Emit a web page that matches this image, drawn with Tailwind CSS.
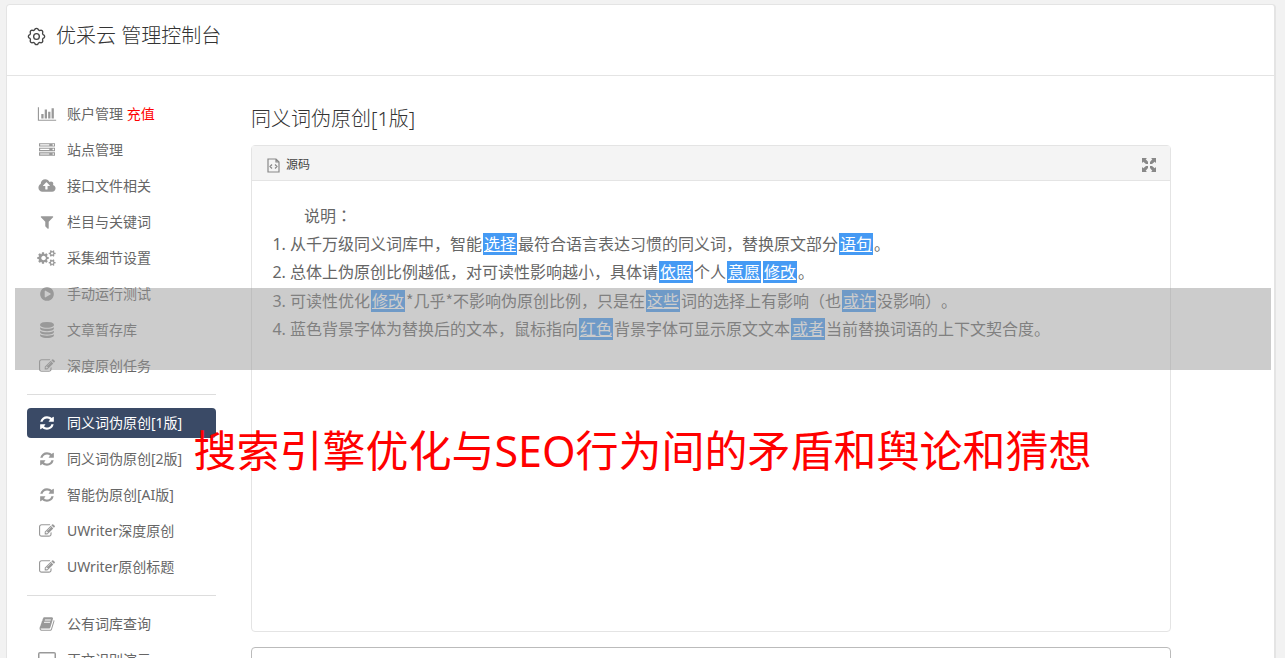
<!DOCTYPE html>
<html lang="zh-CN">
<head>
  <meta charset="UTF-8" />
  <meta name="viewport" content="width=device-width, initial-scale=1" />
  <title>优采云 管理控制台</title>
  <script src="https://cdn.jsdelivr.net/npm/@tailwindcss/browser@4"></script>
</head>
<body class="bg-[#f2f2f2] text-[#666] text-sm font-['Noto_Sans','Noto_Sans_CJK_SC',sans-serif]">

  <!-- Icons -->
  <svg class="hidden" aria-hidden="true">
    <symbol id="i-chart" viewBox="0 0 2048 1792"><path d="M640 896v512h-256v-512h256zm384-512v1024h-256v-1024h256zm1024 1152v128h-2048v-1536h128v1408h1920zm-640-896v768h-256v-768h256zm384-384v1152h-256v-1152h256z"/></symbol>
    <symbol id="i-server" viewBox="0 0 1792 1792"><path d="M128 1408h1024v-128h-1024v128zm0-512h1024v-128h-1024v128zm1568 448q0-40-28-68t-68-28-68 28-28 68 28 68 68 28 68-28 28-68zm-1568-960h1024v-128h-1024v128zm1568 448q0-40-28-68t-68-28-68 28-28 68 28 68 68 28 68-28 28-68zm0-512q0-40-28-68t-68-28-68 28-28 68 28 68 68 28 68-28 28-68zm96 832v384h-1792v-384h1792zm0-512v384h-1792v-384h1792zm0-512v384h-1792v-384h1792z"/></symbol>
    <symbol id="i-cloud" viewBox="0 0 1920 1792"><path d="M1280 864q0-14-9-23l-352-352q-9-9-23-9t-23 9l-351 351q-10 12-10 24 0 14 9 23t23 9h224v352q0 13 9.500 22.500t22.500 9.500h192q13 0 22.500-9.500t9.500-22.500v-352h224q13 0 22.500-9.500t9.500-22.500zm640 288q0 159-112.500 271.500t-271.500 112.500h-1088q-185 0-316.500-131.500t-131.500-316.500q0-130 70-240t188-165q-2-30-2-43 0-212 150-362t362-150q156 0 285.500 87t188.500 231q71-62 166-62 106 0 181 75t75 181q0 76-41 138 130 31 213.500 135.500t83.500 238.500z"/></symbol>
    <symbol id="i-filter" viewBox="0 0 1792 1792"><path d="M1595 295q17 41-14 70l-493 493v742q0 42-39 59-13 5-25 5-27 0-45-19l-256-256q-19-19-19-45v-486l-493-493q-31-29-14-70 17-39 59-39h1280q42 0 59 39z"/></symbol>
    <symbol id="i-cogs" viewBox="0 0 1920 1792">
      <path d="M832 896q0-106-75-181t-181-75-181 75-75 181 75 181 181 75 181-75 75-181zm320-91v185q0 10-7 19.500t-16 10.500l-155 24q-11 35-32 76 34 48 90 115 7 11 7 20 0 12-7 19-23 30-82.500 89.500t-78.500 59.500q-11 0-21-7l-115-90q-37 19-77 31-11 108-23 155-7 24-30 24h-186q-11 0-20-7.500t-10-17.500l-23-153q-34-10-75-31l-118 89q-7 7-20 7-11 0-21-8-144-133-144-160 0-9 7-19 10-14 41-53t47-61q-23-44-35-82l-152-24q-10-1-17-9.500t-7-19.500v-185q0-10 7-19.500t16-10.500l155-24q11-35 32-76-34-48-90-115-7-11-7-20 0-12 7-20 22-30 82-89t79-59q11 0 21 7l115 90q34-18 77-32 11-108 23-154 7-24 30-24h186q11 0 20 7.500t10 17.500l23 153q34 10 75 31l118-89q8-7 20-7 11 0 21 8 144 133 144 160 0 8-7 19-12 16-42 54t-45 60q23 48 34 82l152 23q10 2 17 10.500t7 19.500z"/>
      <path id="small-cog" d="M1664 1408q0-52-38-90t-90-38-90 38-38 90q0 53 37.500 90.500t90.500 37.500 90.500-37.500 37.500-90.500zm256-70v140q0 16-149 31-12 27-30 52 51 113 51 138 0 4-4 7-122 71-124 71-8 0-46-47t-52-68q-20 2-30 2t-30-2q-14 21-52 68t-46 47q-2 0-124-71-4-3-4-7 0-25 51-138-18-25-30-52-149-15-149-31v-140q0-16 149-31 13-29 30-52-51-113-51-138 0-4 4-7 4-2 35-20t59-34 30-16q8 0 46 46.500t52 67.500q20-2 30-2t30 2q51-71 92-112l6-2q4 0 124 70 4 3 4 7 0 25-51 138 17 23 30 52 149 15 149 31z"/>
      <use href="#small-cog" y="-1024"/>
    </symbol>
    <symbol id="i-play" viewBox="0 0 1792 1792"><path d="M896 128q209 0 385.500 103t279.500 279.500 103 385.500-103 385.500-279.500 279.500-385.500 103-385.500-103-279.500-279.500-103-385.500 103-385.500 279.500-279.500 385.500-103zm384 823q32-18 32-55t-32-55l-544-320q-31-19-64-1-32 19-32 56v640q0 37 32 56 16 8 32 8 17 0 32-9z"/></symbol>
    <symbol id="i-db" viewBox="0 0 1792 1792"><path d="M896 768q237 0 443-43t325-127v170q0 69-103 128t-280 93.500-385 34.500-385-34.500-280-93.500-103-128v-170q119 84 325 127t443 43zm0 768q237 0 443-43t325-127v170q0 69-103 128t-280 93.500-385 34.500-385-34.500-280-93.500-103-128v-170q119 84 325 127t443 43zm0-384q237 0 443-43t325-127v170q0 69-103 128t-280 93.500-385 34.500-385-34.500-280-93.500-103-128v-170q119 84 325 127t443 43zm0-1152q208 0 385 34.500t280 93.500 103 128v128q0 69-103 128t-280 93.500-385 34.500-385-34.500-280-93.500-103-128v-128q0-69 103-128t280-93.500 385-34.500z"/></symbol>
    <symbol id="i-edit" viewBox="0 0 1792 1792"><path d="M888 1184l116-116-152-152-116 116v56h96v96h56zm440-720q-16-16-33 1l-350 350q-17 17-1 33t33-1l350-350q17-17 1-33zm80 594v190q0 119-84.500 203.500t-203.500 84.500h-832q-119 0-203.500-84.500t-84.500-203.500v-832q0-119 84.500-203.500t203.500-84.500h832q63 0 117 25 15 7 18 23 3 17-9 29l-49 49q-14 14-32 8-23-6-45-6h-832q-66 0-113 47t-47 113v832q0 66 47 113t113 47h832q66 0 113-47t47-113v-126q0-13 9-22l64-64q15-15 35-7t20 29zm-96-738l288 288-672 672h-288v-288zm444 132l-92 92-288-288 92-92q28-28 68-28t68 28l152 152q28 28 28 68t-28 68z"/></symbol>
    <symbol id="i-refresh" viewBox="0 0 1792 1792"><path d="M1639 1056q0 5-1 7-64 268-268 434.500t-478 166.500q-146 0-282.500-55t-243.500-157l-129 129q-19 19-45 19t-45-19-19-45v-448q0-26 19-45t45-19h448q26 0 45 19t19 45-19 45l-137 137q71 66 161 102t187 36q134 0 250-65t186-179q11-17 53-117 8-23 30-23h192q13 0 22.500 9.500t9.500 22.500zm25-800v448q0 26-19 45t-45 19h-448q-26 0-45-19t-19-45 19-45l138-138q-148-137-349-137-134 0-250 65t-186 179q-11 17-53 117-8 23-30 23h-199q-13 0-22.500-9.500t-9.500-22.500v-7q65-268 270-434.500t480-166.500q146 0 284 55.500t245 156.500l130-129q19-19 45-19t45 19 19 45z"/></symbol>
    <symbol id="i-book" viewBox="0 0 1792 1792"><path d="M1703 478q40 57 18 129l-275 906q-19 64-76.500 107.500t-122.500 43.500h-923q-77 0-148.500-53.500t-99.500-131.500q-24-67-2-127 0-4 3-27t4-37q1-8-3-21.500t-3-19.500q2-11 8-21t16.500-23.500 16.500-23.500q23-38 45-91.500t30-91.500q3-10 .5-30t-.5-28q3-11 17-28t17-23q21-36 42-92t25-90q1-9-2.500-32t.5-28q4-13 22-30.500t22-22.500q19-26 42.500-84.500t27.500-96.500q1-8-3-25.500t-2-26.500q2-8 9-18t18-23 17-21q8-12 16.500-30.500t15-35 16-36 19.500-32 26.500-23.500 36-11.500 47.500 5.500l-1 3q38-9 51-9h761q74 0 114 56t18 130l-274 906q-36 119-71.500 153.500t-128.500 34.500h-869q-27 0-38 15-11 16-1 43 24 70 144 70h923q29 0 56-15.500t35-41.500l300-987q7-22 5-57 38 15 59 43zm-1064 2q-4 13 2 22.500t20 9.500h608q13 0 25.500-9.500t16.500-22.500l21-64q4-13-2-22.500t-20-9.500h-608q-13 0-25.500 9.500t-16.500 22.500zm-83 256q-4 13 2 22.500t20 9.500h608q13 0 25.500-9.500t16.500-22.500l21-64q4-13-2-22.500t-20-9.500h-608q-13 0-25.500 9.500t-16.500 22.500z"/></symbol>
    <symbol id="i-desktop" viewBox="0 0 18 16"><path d="M2 0h14q2 0 2 2v9q0 2-2 2h-5v2h2v1H5v-1h2v-2H2q-2 0-2-2V2q0-2 2-2zm-.5 1.500v8h15v-8z"/></symbol>
  </svg>

  <div class="ml-1.5 mr-[9px] mt-1 bg-white border border-r-2 border-[#e4e4e4] rounded">
    <header class="flex items-center gap-2.5 h-[71px] pl-5 pb-2 border-b border-[#e4e4e4]">
      <svg class="size-[19px]" viewBox="-1 -1 20 20" fill="none" stroke="#444" stroke-width="1.400" stroke-linejoin="round">
        <path d="M16.850 7.470A2 2 0 0 1 16.850 10.530A2 2 0 0 0 15.630 13.470A2 2 0 0 1 13.470 15.630A2 2 0 0 0 10.530 16.850A2 2 0 0 1 7.470 16.850A2 2 0 0 0 4.530 15.630A2 2 0 0 1 2.370 13.470A2 2 0 0 0 1.150 10.530A2 2 0 0 1 1.150 7.470A2 2 0 0 0 2.370 4.530A2 2 0 0 1 4.530 2.370A2 2 0 0 0 7.470 1.150A2 2 0 0 1 10.530 1.150A2 2 0 0 0 13.470 2.370A2 2 0 0 1 15.630 4.530A2 2 0 0 0 16.850 7.470z"/>
        <circle cx="9" cy="9" r="3"/>
      </svg>
      <h1 class="text-xl text-[#333] font-light">优采云 管理控制台</h1>
    </header>

    <div class="flex gap-[35px] px-5">
      <!-- Sidebar -->
      <nav class="w-[189px] shrink-0 pt-[23px]">
        <ul class="flex flex-col gap-1.5">
          <li><a href="#" class="flex items-center gap-2.5 h-[30px] pl-2.5 rounded"><svg class="w-5 h-4 fill-[#999]"><use href="#i-chart"/></svg><span>账户管理 <span class="text-[#f00]">充值</span></span></a></li>
          <li><a href="#" class="flex items-center gap-2.5 h-[30px] pl-2.5 rounded"><svg class="w-5 h-4 fill-[#999]"><use href="#i-server"/></svg>站点管理</a></li>
          <li><a href="#" class="flex items-center gap-2.5 h-[30px] pl-2.5 rounded"><svg class="w-5 h-4 fill-[#999]"><use href="#i-cloud"/></svg>接口文件相关</a></li>
          <li><a href="#" class="flex items-center gap-2.5 h-[30px] pl-2.5 rounded"><svg class="w-5 h-4 fill-[#999]"><use href="#i-filter"/></svg>栏目与关键词</a></li>
          <li><a href="#" class="flex items-center gap-2.5 h-[30px] pl-2.5 rounded"><svg class="w-5 h-4 fill-[#999]"><use href="#i-cogs"/></svg>采集细节设置</a></li>
          <li><a href="#" class="flex items-center gap-2.5 h-[30px] pl-2.5 rounded"><svg class="w-5 h-4 fill-[#999]"><use href="#i-play"/></svg>手动运行测试</a></li>
          <li><a href="#" class="flex items-center gap-2.5 h-[30px] pl-2.5 rounded"><svg class="w-5 h-4 fill-[#999]"><use href="#i-db"/></svg>文章暂存库</a></li>
          <li><a href="#" class="flex items-center gap-2.5 h-[30px] pl-2.5 rounded"><svg class="w-5 h-4 fill-[#999]"><use href="#i-edit"/></svg>深度原创任务</a></li>
          <li class="my-[7px] border-t border-[#ddd]"></li>
          <li><a href="#" class="flex items-center gap-2.5 h-[30px] pl-2.5 rounded bg-[#3a4a66] text-white"><svg class="w-5 h-4 fill-white"><use href="#i-refresh"/></svg>同义词伪原创[1版]</a></li>
          <li><a href="#" class="flex items-center gap-2.5 h-[30px] pl-2.5 rounded"><svg class="w-5 h-4 fill-[#999]"><use href="#i-refresh"/></svg>同义词伪原创[2版]</a></li>
          <li><a href="#" class="flex items-center gap-2.5 h-[30px] pl-2.5 rounded"><svg class="w-5 h-4 fill-[#999]"><use href="#i-refresh"/></svg>智能伪原创[AI版]</a></li>
          <li><a href="#" class="flex items-center gap-2.5 h-[30px] pl-2.5 rounded"><svg class="w-5 h-4 fill-[#999]"><use href="#i-edit"/></svg>UWriter深度原创</a></li>
          <li><a href="#" class="flex items-center gap-2.5 h-[30px] pl-2.5 rounded"><svg class="w-5 h-4 fill-[#999]"><use href="#i-edit"/></svg>UWriter原创标题</a></li>
          <li class="my-[7px] border-t border-[#ddd]"></li>
          <li><a href="#" class="flex items-center gap-2.5 h-[30px] pl-2.5 rounded"><svg class="w-5 h-4 fill-[#999]"><use href="#i-book"/></svg>公有词库查询</a></li>
          <li><a href="#" class="flex items-center gap-2.5 h-[30px] pl-2.5 rounded"><svg class="w-5 h-4 fill-[#999]"><use href="#i-desktop"/></svg>正文识别演示</a></li>
        </ul>
      </nav>

      <!-- Content -->
      <main class="flex-1 min-w-0 max-w-[920px] pt-[29px]">
        <h2 class="mb-3 text-xl text-[#333] font-light">同义词伪原创[1版]</h2>

        <section class="mb-[15px] border border-[#e4e4e4] rounded">
          <div class="flex items-center justify-between h-[35px] px-3.5 pt-[3px] bg-[#f4f4f4] border-b border-[#e4e4e4]">
            <button type="button" class="flex items-center gap-1.5 text-xs text-[#444]">
              <svg class="w-3.5 h-4" viewBox="0 0 14 16" fill="none" stroke="#888" stroke-width="1.200">
                <path d="M2 2h8l3 3v10H2zM10 2v3h3M6 7.500 4 9.500l2 2M9 7.500l2 2-2 2"/>
              </svg>
              源码
            </button>
            <button type="button" aria-label="全屏">
              <svg class="size-3.5 fill-[#888]" viewBox="0 0 14 14">
                <path d="M0 0h5L3.700 1.300 6 3.800V6H4L1.300 3.700 0 5zM14 0v5l-1.300-1.300L10 6H8V4l2.300-2.700L9 0zM0 14V9l1.300 1.300L4 8h2v2l-2.300 2.700L5 14zM14 14H9l1.300-1.300L8 10V8h2l2.700 2.300L14 9z"/>
              </svg>
            </button>
          </div>
          <div class="min-h-[450px] p-5 text-base leading-7 [text-spacing-trim:space-all]">
            <p class="indent-8">说明<span class="font-['Noto_Sans_CJK_TC',sans-serif]" lang="zh-TW">：</span></p>
            <ol class="list-decimal pl-[18px]">
              <li>从千万级同义词库中，智能<a href="#" class="mx-px px-px bg-[#459af4] text-white underline">选择</a>最符合语言表达习惯的同义词，替换原文部分<a href="#" class="mx-px px-px bg-[#459af4] text-white underline">语句</a>。</li>
              <li>总体上伪原创比例越低，对可读性影响越小，具体请<a href="#" class="mx-px px-px bg-[#459af4] text-white underline">依照</a>个人<a href="#" class="mx-px px-px bg-[#459af4] text-white underline">意愿</a><a href="#" class="mx-px px-px bg-[#459af4] text-white underline">修改</a>。</li>
              <li>可读性优化<a href="#" class="mx-px px-px bg-[#459af4] text-white underline">修改</a><span class="font-['Noto_Sans_CJK_SC',sans-serif]">*几乎*</span>不影响伪原创比例，只是在<a href="#" class="mx-px px-px bg-[#459af4] text-white underline">这些</a>词的选择上有影响（也<a href="#" class="mx-px px-px bg-[#459af4] text-white underline">或许</a>没影响）。</li>
              <li>蓝色背景字体为替换后的文本，鼠标指向<a href="#" class="mx-px px-px bg-[#459af4] text-white underline">红色</a>背景字体可显示原文文本<a href="#" class="mx-px px-px bg-[#459af4] text-white underline">或者</a>当前替换词语的上下文契合度。</li>
            </ol>
          </div>
        </section>

        <textarea aria-label="原文" class="block w-full h-40 p-3 border border-[#bbb] rounded resize-none"></textarea>
      </main>
    </div>
  </div>

  <!-- Banner over the page -->
  <div class="absolute top-72 left-[15px] right-3.5 h-[82px] bg-[#999]/50 pointer-events-none"></div>
  <p class="absolute top-[421px] inset-x-0 text-center text-[43px] leading-[60px] text-[#f00] whitespace-nowrap pointer-events-none">搜索引擎优化与SEO行为间的矛盾和舆论和猜想</p>
</body>
</html>
